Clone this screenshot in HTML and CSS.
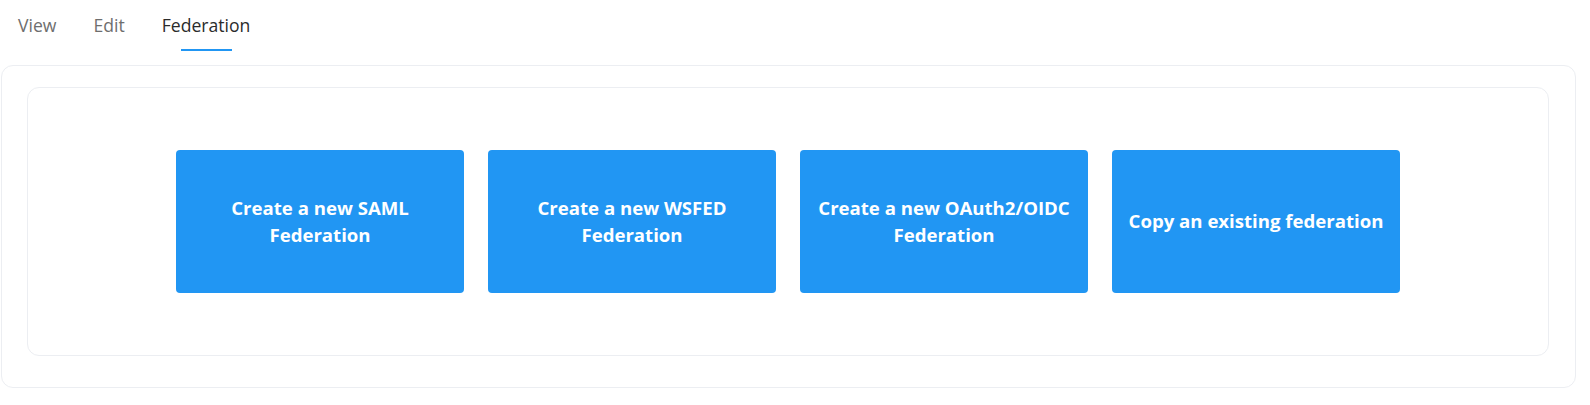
FILE: index.html
```html
<!DOCTYPE html>
<html lang="en">
<head>
<meta charset="utf-8">
<title>Federation</title>
<link rel="stylesheet" href="styles.css">
</head>
<body>
  <nav class="tabs">
    <a class="tab">View</a>
    <a class="tab">Edit</a>
    <a class="tab tab--active">Federation</a>
  </nav>
  <section class="panel">
    <div class="card">
      <div class="actions">
        <button class="action">Create a new SAML<br>Federation</button>
        <button class="action">Create a new WSFED<br>Federation</button>
        <button class="action">Create a new OAuth2/OIDC<br>Federation</button>
        <button class="action">Copy an existing federation</button>
      </div>
    </div>
  </section>
</body>
</html>
```

FILE: styles.css
```css
html, body {
  margin: 0;
  background: #ffffff;
  font-family: "Open Sans", "Noto Sans", sans-serif;
}

.tabs {
  display: flex;
  gap: 37px;
  height: 64px;
  padding-left: 18px;
  box-sizing: border-box;
}

.tab {
  position: relative;
  padding-top: 13px;
  font-size: 17.6px;
  line-height: 24px;
  color: #6e6e6e;
  cursor: pointer;
}

.tab--active {
  color: #2b2b2b;
}

/* short centred indicator under the selected tab */
.tab--active::after {
  content: "";
  position: absolute;
  left: 50%;
  top: 49px;
  width: 51px;
  height: 2px;
  margin-left: -25.5px;
  background: #2196f3;
}

.panel {
  margin: 1px 14px 0 1px;
  padding: 21px 26px 31px 25px;
  border: 1px solid #eceef2;
  border-radius: 12px;
  background: #ffffff;
}

.card {
  border: 1px solid #eceef2;
  border-radius: 12px;
  background: #ffffff;
  padding: 62px 0;
}

.actions {
  display: flex;
  justify-content: center;
  gap: 24px;
}

.action {
  width: 288px;
  height: 143px;
  padding: 0 0 2px;
  border: none;
  border-radius: 4px;
  background: #2196f3;
  color: #ffffff;
  font-family: "Open Sans", "Noto Sans", sans-serif;
  font-weight: 700;
  font-size: 18.6px;
  line-height: 27px;
  cursor: pointer;
}
```
